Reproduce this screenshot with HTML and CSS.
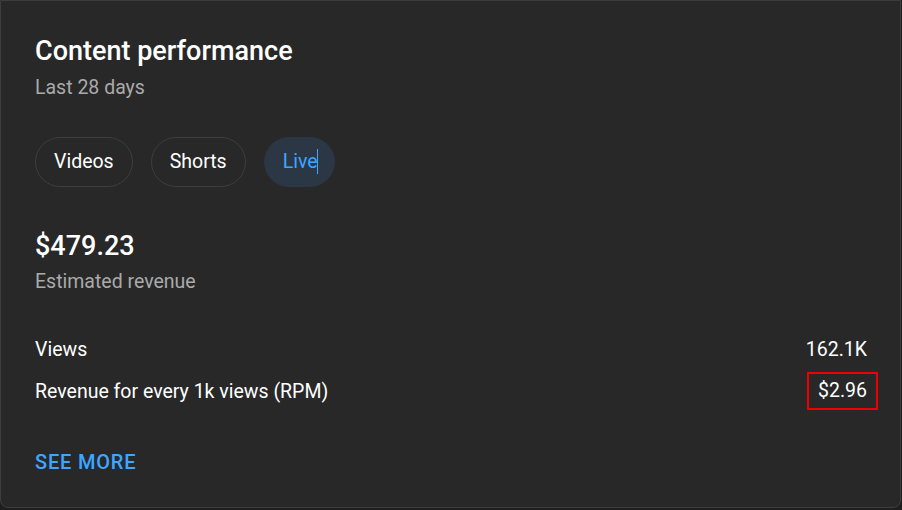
FILE: index.html
```html
<!DOCTYPE html>
<html>
<head>
<meta charset="utf-8">
<link rel="stylesheet" href="styles.css">
</head>
<body>
<div class="card">
  <h1 class="title">Content performance</h1>
  <div class="subtitle">Last 28 days</div>
  <div class="chips">
    <div class="chip">Videos</div>
    <div class="chip">Shorts</div>
    <div class="chip active">Live<span class="caret"></span></div>
  </div>
  <div class="big">$479.23</div>
  <div class="biglabel">Estimated revenue</div>
  <div class="rows">
    <div class="row"><span>Views</span><span class="val">162.1K</span></div>
    <div class="row"><span>Revenue for every 1k views (RPM)</span><span class="val boxed">$2.96</span></div>
  </div>
  <div class="more">SEE MORE</div>
</div>
</body>
</html>
```
FILE: styles.css
```css
html, body {
  margin: 0;
  padding: 0;
  background: #1f1f1f;
  width: 902px;
  height: 510px;
  overflow: hidden;
}
body {
  font-family: Roboto, "Noto Sans", sans-serif;
  color: #f1f1f1;
}
.card {
  box-sizing: border-box;
  width: 901px;
  height: 508px;
  background: #282828;
  border: 1px solid #3d3d3d;
  border-radius: 0 0 8px 8px;
  padding: 30px 33px 0 34px;
}
.title {
  margin: 0;
  font-size: 27px;
  font-weight: 500;
  line-height: 40px;
  color: #fff;
}
.subtitle {
  font-size: 19.5px;
  line-height: 34px;
  color: #aaa;
}
.chips {
  display: flex;
  gap: 18px;
  margin-top: 32px;
}
.chip {
  box-sizing: border-box;
  height: 50px;
  padding: 0 18px;
  border: 1px solid #3e3e3e;
  border-radius: 25px;
  font-size: 19.5px;
  line-height: 48px;
  color: #fff;
}
.chip.active {
  background: #2b3744;
  border-color: #2b3744;
  color: #3ea6ff;
  padding-right: 16px;
}
.caret {
  display: inline-block;
  width: 1px;
  height: 25px;
  margin-left: -1px;
  background: #3ea6ff;
  vertical-align: -6px;
}
.big {
  margin-top: 42px;
  font-size: 27px;
  font-weight: 500;
  line-height: 34px;
  color: #fff;
}
.biglabel {
  font-size: 19.5px;
  line-height: 30px;
  color: #aaa;
  margin-top: 4px;
}
.rows {
  margin-top: 31px;
}
.row {
  display: flex;
  justify-content: space-between;
  align-items: center;
  font-size: 19.5px;
  height: 42px;
  color: #fff;
}
.val.boxed {
  outline: 2px solid #e00;
  outline-offset: 0;
  padding: 5px 9px;
  margin-right: -9px;
  line-height: 24px;
}
.more {
  margin-top: 35px;
  font-size: 20px;
  font-weight: 500;
  letter-spacing: 0.8px;
  line-height: 30px;
  color: #3ea6ff;
}
```
